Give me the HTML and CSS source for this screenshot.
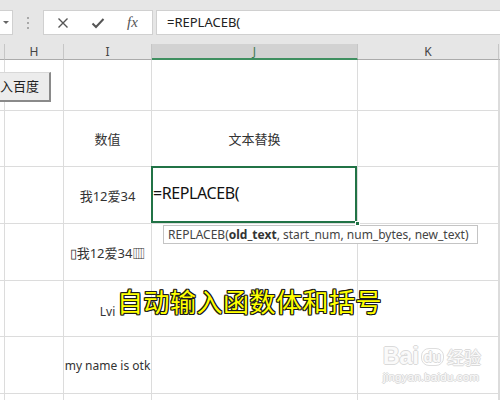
FILE: index.html
```html
<!DOCTYPE html>
<html>
<head>
<meta charset="utf-8">
<link rel="stylesheet" href="styles.css">
</head>
<body>
<div class="app">
  <div class="fbar">
    <div class="namebox"><span class="caret"></span></div>
    <div class="grip"><i></i><i></i><i></i></div>
    <div class="fxbtns">
      <svg class="ico" width="12" height="12" viewBox="0 0 12 12"><path d="M1.5 1.5 L10.5 10.5 M10.5 1.5 L1.5 10.5" stroke="#555" stroke-width="1.4" fill="none"/></svg>
      <svg class="ico" width="14" height="12" viewBox="0 0 14 12"><path d="M1.5 6.5 L5 10 L12.5 2" stroke="#555" stroke-width="2" fill="none"/></svg>
      <span class="fx">fx</span>
    </div>
    <div class="finput">=REPLACEB(</div>
  </div>
  <div class="sheet">
    <div class="hd"></div>
    <div class="hd">H</div>
    <div class="hd">I</div>
    <div class="hd hd-sel">J</div>
    <div class="hd">K</div>
    <div class="hd hd-end"></div>

    <div class="c"></div>
    <div class="c btncell"><div class="btn">入百度</div></div>
    <div class="c"></div>
    <div class="c"></div>
    <div class="c"></div>
    <div class="c"></div>

    <div class="c"></div>
    <div class="c"></div>
    <div class="c ctr">数值</div>
    <div class="c ctr">文本替换</div>
    <div class="c"></div>
    <div class="c"></div>

    <div class="c"></div>
    <div class="c"></div>
    <div class="c ctr">我12爱34</div>
    <div class="c active"><span class="edit">=REPLACEB(</span><span class="handle"></span></div>
    <div class="c"></div>
    <div class="c"></div>

    <div class="c"></div>
    <div class="c"></div>
    <div class="c ctr">▯我12爱34▥</div>
    <div class="c"></div>
    <div class="c"></div>
    <div class="c"></div>

    <div class="c"></div>
    <div class="c"></div>
    <div class="c ctr lat low">Lvi</div>
    <div class="c"></div>
    <div class="c"></div>
    <div class="c"></div>

    <div class="c"></div>
    <div class="c"></div>
    <div class="c ctr lat">my name is otk</div>
    <div class="c"></div>
    <div class="c"></div>
    <div class="c"></div>

    <div class="c"></div>
    <div class="c"></div>
    <div class="c"></div>
    <div class="c"></div>
    <div class="c"></div>
    <div class="c"></div>
  </div>

  <div class="tip">REPLACEB(<b>old_text</b>, start_num, num_bytes, new_text)</div>
  <div class="caption">自动输入函数体和括号</div>
  <div class="wm">
    <div class="wm-top"><span class="wm-bai">Bai</span><span class="wm-du">du</span><span class="wm-jy">经验</span></div>
    <div class="wm-url">jingyan.baidu.com</div>
  </div>
</div>
</body>
</html>
```
FILE: styles.css
```css
* { box-sizing: border-box; }
html, body { margin: 0; padding: 0; }
body {
  width: 500px;
  height: 400px;
  overflow: hidden;
  background: #fff;
  font-family: "Noto Sans", "Noto Sans CJK SC", sans-serif;
  color: #333;
}
.app {
  position: relative;
  width: 500px;
  height: 400px;
  overflow: hidden;
}
.fbar {
  height: 44px;
  background: #e6e6e6;
  display: flex;
  align-items: flex-start;
  padding-top: 10px;
}
.namebox {
  width: 13px;
  height: 25px;
  background: #fff;
  border: 1px solid #d0d0d0;
  border-left: none;
  display: flex;
  align-items: center;
  justify-content: center;
}
.caret {
  width: 0;
  height: 0;
  border-left: 3px solid transparent;
  border-right: 3px solid transparent;
  border-top: 3px solid #666;
}
.grip {
  width: 30px;
  height: 25px;
  display: flex;
  flex-direction: column;
  align-items: center;
  justify-content: center;
  gap: 3px;
}
.grip i {
  display: block;
  width: 2px;
  height: 2px;
  background: #a8a8a8;
}
.fxbtns {
  width: 110px;
  height: 25px;
  background: #fff;
  border: 1px solid #d0d0d0;
  display: flex;
  align-items: center;
  padding-left: 13px;
  gap: 22px;
}
.fx {
  font-family: "Liberation Serif", serif;
  font-style: italic;
  font-size: 15px;
  color: #555;
}
.finput {
  margin-left: 3px;
  flex: 1;
  height: 25px;
  background: #fff;
  border: 1px solid #d0d0d0;
  border-right: none;
  padding-left: 10px;
  font-size: 13px;
  line-height: 23px;
  color: #222;
}
.sheet {
  display: grid;
  grid-template-columns: 5px 59px 88px 206px 141px 1px;
  grid-template-rows: 16px 51px 56px 57px 57px 56px 57px 10px;
}
.hd {
  background: #e6e6e6;
  border-right: 1px solid #c6c6c6;
  border-bottom: 1px solid #ababab;
  font-size: 12px;
  line-height: 15px;
  text-align: center;
  color: #444;
}
.hd-sel {
  background: #d2d2d2;
  border-bottom: 2px solid #3f8f60;
  color: #3f7a55;
}
.hd-end { border-right: none; }
.c {
  border-right: 1px solid #dcdcdc;
  border-bottom: 1px solid #dcdcdc;
  font-size: 13px;
  color: #333;
}
.ctr {
  display: flex;
  align-items: center;
  justify-content: center;
  white-space: nowrap;
}
.lat { font-size: 12px; }
.low { padding-top: 6px; }
.btncell { position: relative; }
.btn {
  position: absolute;
  left: -14px;
  top: 12px;
  width: 60px;
  height: 30px;
  background: #ececec;
  border: 1px solid #d8d8d8;
  border-right: 2px solid #8a8a8a;
  border-bottom: 2px solid #8a8a8a;
  font-size: 13px;
  line-height: 26px;
  text-align: right;
  padding-right: 10px;
  color: #222;
}
.active {
  position: relative;
  display: flex;
  align-items: center;
}
.active::after {
  content: "";
  position: absolute;
  left: -1px;
  top: -1px;
  right: 0;
  bottom: 0;
  border: 2px solid #217346;
}
.edit {
  margin-left: 1px;
  margin-top: -4px;
  font-size: 16px;
  letter-spacing: -0.4px;
  color: #111;
}
.handle {
  position: absolute;
  right: -3px;
  bottom: -3px;
  width: 5px;
  height: 5px;
  background: #217346;
  border: 1px solid #fff;
  z-index: 2;
}
.tip {
  position: absolute;
  left: 163px;
  top: 225px;
  width: 315px;
  height: 19px;
  background: #fff;
  border: 1px solid #c4c4c4;
  font-size: 12px;
  line-height: 17px;
  padding-left: 4px;
  color: #444;
  white-space: nowrap;
}
.tip b { color: #333; }
.caption {
  position: absolute;
  left: 117px;
  top: 282px;
  font-family: "Noto Sans CJK SC", sans-serif;
  font-size: 26px;
  letter-spacing: 0.5px;
  font-weight: 400;
  color: #ffff00;
  white-space: nowrap;
  text-shadow:
    1px 0 0 #1a1a1a, -1px 0 0 #1a1a1a, 0 1px 0 #1a1a1a, 0 -1px 0 #1a1a1a,
    1px 1px 0 #1a1a1a, -1px -1px 0 #1a1a1a, 1px -1px 0 #1a1a1a, -1px 1px 0 #1a1a1a;
}
.wm {
  position: absolute;
  left: 383px;
  top: 342px;
  color: #fafafa;
}
.wm-top {
  display: flex;
  align-items: flex-end;
  height: 26px;
}
.wm-bai, .wm-du, .wm-jy, .wm-url {
  text-shadow:
    1px 0 0 #dadada, -1px 0 0 #dadada, 0 1px 0 #dadada, 0 -1px 0 #dadada;
}
.wm-bai {
  font-family: "Liberation Sans", sans-serif;
  font-weight: 700;
  font-size: 23px;
  line-height: 24px;
}
.wm-du {
  font-family: "Liberation Sans", sans-serif;
  font-weight: 700;
  font-size: 14px;
  line-height: 16px;
  margin: 0 3px 2px 2px;
  padding: 0 2px;
  border: 1px solid #dedede;
  border-radius: 8px;
}
.wm-jy {
  font-family: "Noto Sans CJK SC", sans-serif;
  font-size: 17px;
  line-height: 22px;
}
.wm-url {
  font-family: "Liberation Sans", sans-serif;
  font-size: 11.5px;
  margin-top: 3px;
  letter-spacing: 0.2px;
}
```
